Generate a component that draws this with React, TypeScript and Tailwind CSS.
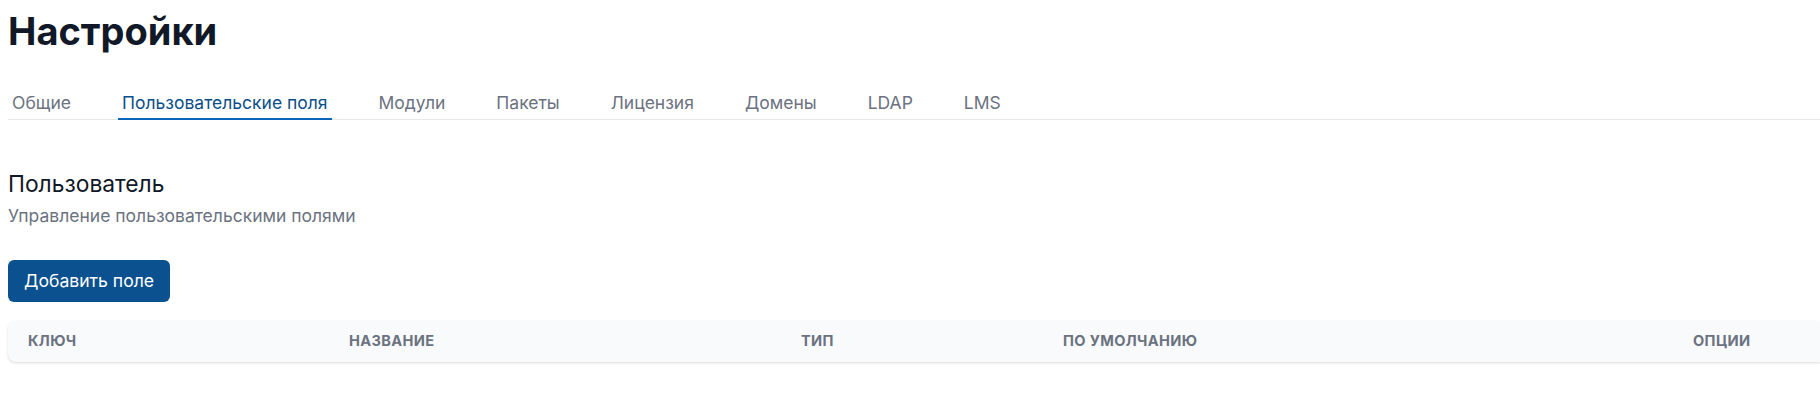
const tabs = [
  "Общие",
  "Пользовательские поля",
  "Модули",
  "Пакеты",
  "Лицензия",
  "Домены",
  "LDAP",
  "LMS",
];

const columns = ["Ключ", "Название", "Тип", "По умолчанию", "Опции"];

export default function App() {
  const active = 1;

  return (
    <div className="w-full min-h-screen overflow-hidden bg-white pl-2 font-['Inter',sans-serif]">
      {/* Page title */}
      <h1 className="pt-[11px] text-[38px] leading-10 font-bold text-[#111827]">
        Настройки
      </h1>

      {/* Tabs */}
      <nav className="mt-[39px] flex gap-[43px] border-b border-[#e5e7eb]">
        {tabs.map((tab, i) => (
          <button
            key={tab}
            className={
              i === active
                ? "-mb-px border-b-2 border-[#0b66b8] px-1 pt-px pb-[3px] text-[17.5px] leading-6 text-[#0b4f8a]"
                : "-mb-px border-b-2 border-transparent px-1 pt-px pb-[3px] text-[17.5px] leading-6 text-[#6b7280]"
            }
          >
            {tab}
          </button>
        ))}
      </nav>

      {/* Section */}
      <section className="mt-[50px]">
        <h2 className="text-[22.8px] leading-7 text-[#111827]">Пользователь</h2>
        <p className="mt-1.5 text-[17.5px] leading-6 text-[#6b7280]">
          Управление пользовательскими полями
        </p>

        <button className="mt-8 h-[42px] rounded-md bg-[#0b5190] px-4 text-[17.6px] text-white">
          Добавить поле
        </button>

        {/* Table */}
        <div className="mt-[19px] grid h-[41px] grid-cols-[321px_452px_262px_630px_1fr] items-center rounded-l-lg bg-[#f9fafb] shadow-[0_1px_3px_0_rgba(0,0,0,0.12),0_1px_2px_-1px_rgba(0,0,0,0.1)]">
          {columns.map((col) => (
            <div
              key={col}
              className="pl-5 text-[14.6px] font-bold uppercase tracking-wide text-[#6b7280]"
            >
              {col}
            </div>
          ))}
        </div>
      </section>
    </div>
  );
}
